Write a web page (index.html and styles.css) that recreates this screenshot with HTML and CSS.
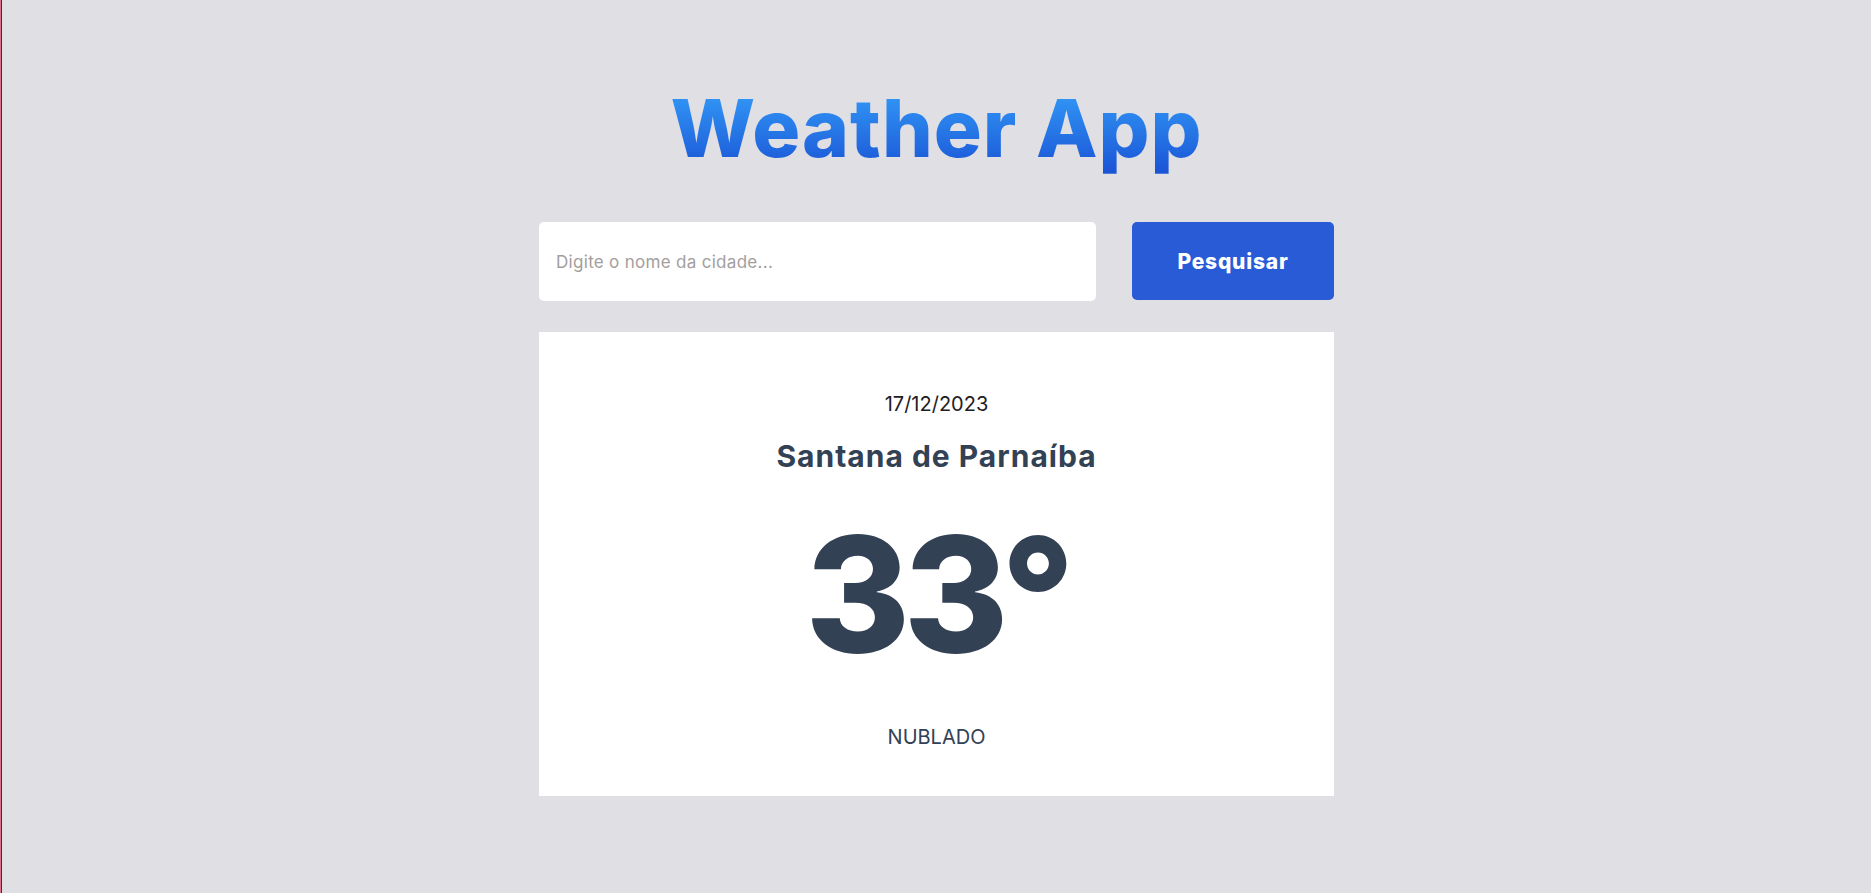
FILE: index.html
```html
<!DOCTYPE html>
<html lang="pt-BR">
<head>
<meta charset="utf-8">
<title>Weather App</title>
<link rel="stylesheet" href="styles.css">
</head>
<body>
<main class="app">
  <h1 class="title">Weather App</h1>
  <form class="search">
    <input class="search-input" type="text" placeholder="Digite o nome da cidade...">
    <button class="search-button" type="button">Pesquisar</button>
  </form>
  <section class="card">
    <p class="date">17/12/2023</p>
    <h2 class="city">Santana de Parnaíba</h2>
    <p class="temp">33°</p>
    <p class="condition">NUBLADO</p>
  </section>
</main>
</body>
</html>
```

FILE: styles.css
```css
* { box-sizing: border-box; }

html, body { margin: 0; padding: 0; }

body {
  min-height: 100vh;
  padding-left: 2px;
  background: #e0dfe4;
  font-family: "Inter", "Open Sans", sans-serif;
  box-shadow: inset 1px 0 0 #d9728a, inset 2px 0 0 #3b2f35;
}

.app {
  width: 795px;
  margin: 0 auto;
  padding-top: 80px;
  display: flex;
  flex-direction: column;
  align-items: center;
}

.title {
  margin: 0;
  font-size: 80px;
  line-height: 96px;
  font-weight: 800;
  letter-spacing: 1px;
  background: linear-gradient(180deg, #3092f3 20%, #1a55d6 95%);
  -webkit-background-clip: text;
  background-clip: text;
  color: transparent;
}

.search {
  width: 100%;
  margin-top: 46px;
  display: flex;
  gap: 36px;
}

.search-input {
  flex: 1;
  height: 79px;
  border: none;
  border-radius: 5px;
  background: #ffffff;
  padding: 0 17px;
  font-family: "Inter", sans-serif;
  font-size: 17px;
  letter-spacing: 0.3px;
  color: #333;
  outline: none;
}

.search-input::placeholder { color: #a39e9e; }

.search-button {
  width: 202px;
  height: 78px;
  border: none;
  border-radius: 5px;
  background: #295bd6;
  color: #ffffff;
  font-family: "Inter", sans-serif;
  font-size: 21px;
  letter-spacing: 0.8px;
  font-weight: 800;
  cursor: pointer;
}

.card {
  width: 100%;
  height: 464px;
  margin-top: 31px;
  background: #ffffff;
  display: flex;
  flex-direction: column;
  align-items: center;
  padding-top: 58px;
}

.date {
  margin: 0;
  font-size: 20px;
  line-height: 28px;
  color: #1f2023;
}

.city {
  margin: 20px 0 0;
  font-size: 30px;
  line-height: 36px;
  font-weight: 700;
  letter-spacing: 1px;
  color: #334155;
}

.temp {
  margin: 35px 0 0;
  font-size: 160px;
  line-height: 170px;
  font-weight: 800;
  color: #334155;
  letter-spacing: -7px;
}

.condition {
  margin: 44px 0 0;
  font-size: 20px;
  line-height: 28px;
  color: #334155;
}
```
